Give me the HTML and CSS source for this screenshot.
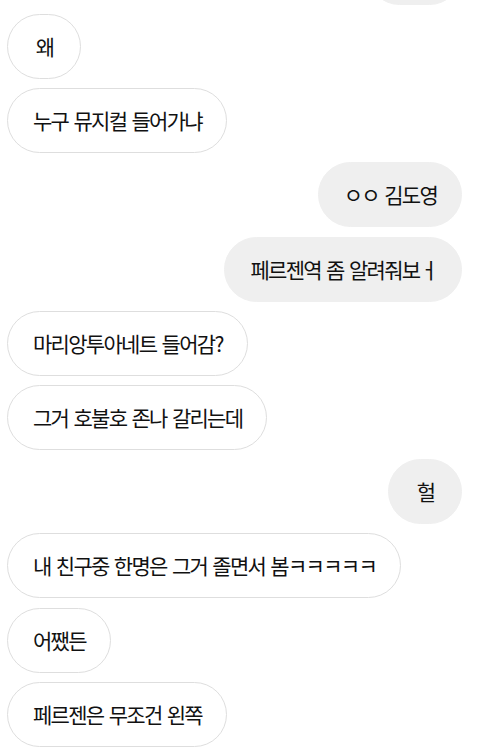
FILE: index.html
```html
<!DOCTYPE html>
<html lang="ko">
<head>
<meta charset="utf-8">
<link rel="stylesheet" href="styles.css">
</head>
<body>
<div class="chat">
  <div class="msg out"><span class="hidden-text">진짜?</span></div>
  <div class="msg in">왜</div>
  <div class="msg in">누구 뮤지컬 들어가냐</div>
  <div class="msg out">ㅇㅇ 김도영</div>
  <div class="msg out">페르젠역 좀 알려줘보ㅓ</div>
  <div class="msg in">마리앙투아네트 들어감?</div>
  <div class="msg in">그거 호불호 존나 갈리는데</div>
  <div class="msg out">헐</div>
  <div class="msg in">내 친구중 한명은 그거 졸면서 봄ㅋㅋㅋㅋㅋ</div>
  <div class="msg in">어쨌든</div>
  <div class="msg in">페르젠은 무조건 왼쪽</div>
</div>
</body>
</html>
```

FILE: styles.css
```css
html, body {
  margin: 0;
  padding: 0;
  background: #ffffff;
  overflow: hidden;
}

.chat {
  display: flex;
  flex-direction: column;
  gap: 9.2px;
  margin-top: -60.2px;
  padding: 0 18px 0 7px;
  font-family: "Noto Sans CJK KR", "Noto Sans", sans-serif;
  font-size: 21px;
  letter-spacing: -1.7px;
  word-spacing: 1px;
  color: #111111;
}

.msg {
  box-sizing: border-box;
  height: 65px;
  min-width: 74px;
  display: flex;
  align-items: center;
  justify-content: center;
  padding: 0 24px 0 25px;
  border-radius: 999px;
  white-space: nowrap;
  line-height: 1;
}

.in {
  align-self: flex-start;
  background: #ffffff;
  border: 1.5px solid #dedede;
}

.out {
  align-self: flex-end;
  background: #efefef;
  border: 1.5px solid #efefef;
}

.hidden-text {
  visibility: hidden;
}
```
